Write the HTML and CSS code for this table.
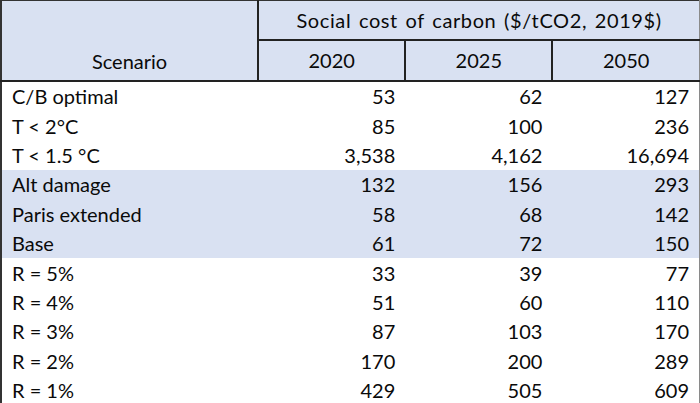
FILE: index.html
```html
<!DOCTYPE html>
<html>
<head>
<meta charset="utf-8">
<link rel="stylesheet" href="styles.css">
</head>
<body>
<table class="scc">
  <colgroup>
    <col class="c-name">
    <col class="c-num">
    <col class="c-num">
    <col class="c-num">
  </colgroup>
  <thead>
    <tr class="h1">
      <th rowspan="2" class="scen">Scenario</th>
      <th colspan="3" class="title">Social cost of carbon ($/tCO2, 2019$)</th>
    </tr>
    <tr class="h2">
      <th class="yr">2020</th>
      <th class="yr">2025</th>
      <th class="yr last">2050</th>
    </tr>
  </thead>
  <tbody>
    <tr><td>C/B optimal</td><td>53</td><td>62</td><td>127</td></tr>
    <tr><td>T &lt; 2°C</td><td>85</td><td>100</td><td>236</td></tr>
    <tr><td>T &lt; 1.5 °C</td><td>3,538</td><td>4,162</td><td>16,694</td></tr>
    <tr class="band"><td>Alt damage</td><td>132</td><td>156</td><td>293</td></tr>
    <tr class="band"><td>Paris extended</td><td>58</td><td>68</td><td>142</td></tr>
    <tr class="band"><td>Base</td><td>61</td><td>72</td><td>150</td></tr>
    <tr><td>R = 5%</td><td>33</td><td>39</td><td>77</td></tr>
    <tr><td>R = 4%</td><td>51</td><td>60</td><td>110</td></tr>
    <tr><td>R = 3%</td><td>87</td><td>103</td><td>170</td></tr>
    <tr><td>R = 2%</td><td>170</td><td>200</td><td>289</td></tr>
    <tr><td>R = 1%</td><td>429</td><td>505</td><td>609</td></tr>
  </tbody>
</table>
</body>
</html>
```

FILE: styles.css
```css
html, body {
  margin: 0;
  padding: 0;
  background: #ffffff;
}

.scc {
  border-collapse: collapse;
  table-layout: fixed;
  width: 700px;
  font-family: "Lato", "Open Sans", sans-serif;
  font-size: 20px;
  color: #0a0a0a;
  border-top: 1px solid #333333;
  border-left: 2px solid #333333;
  border-right: 1px solid #8a8a8a;
}

.c-name { width: 257px; }
.c-num { width: 147px; }

.scc th {
  background: #d9e1f2;
  font-weight: normal;
  text-align: center;
  padding: 0;
}

.h1 { height: 39px; }
.h2 { height: 41px; }

.scen {
  vertical-align: bottom;
  padding-bottom: 7px !important;
  border-right: 2px solid #222222;
  border-bottom: 2px solid #222222;
}

.title {
  border-bottom: 2px solid #222222;
  letter-spacing: 0.6px;
  word-spacing: 2px;
}

.yr {
  border-right: 2px solid #222222;
  border-bottom: 2px solid #222222;
}

.yr.last {
  border-right: none;
}

.scc td {
  height: 29.4px;
  padding: 0 10px 0 0;
  text-align: right;
  vertical-align: middle;
  white-space: nowrap;
}

.scc td:first-child {
  text-align: left;
  padding: 0 0 0 10px;
}

.band td {
  background: #d9e1f2;
}
```
